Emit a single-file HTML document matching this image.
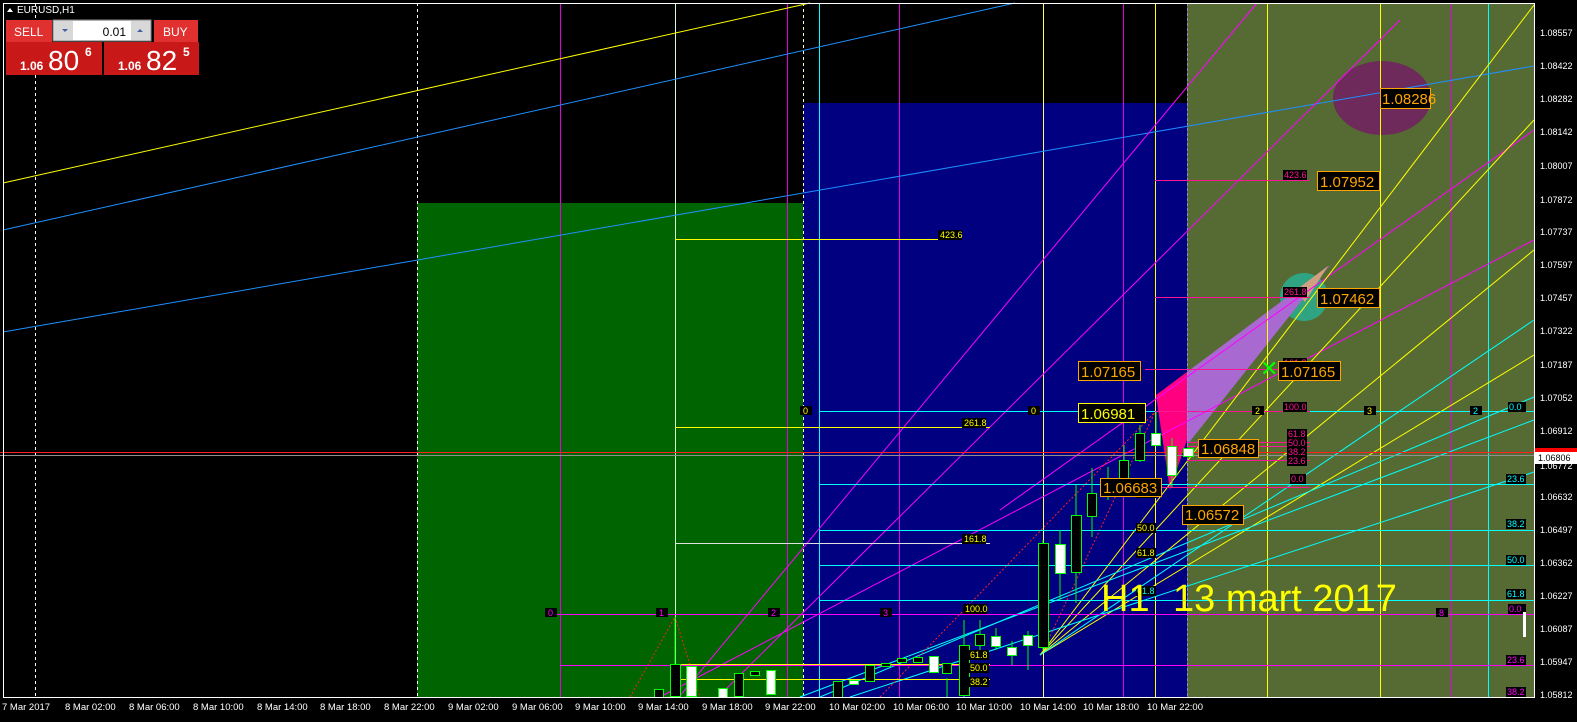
<!DOCTYPE html>
<html><head><meta charset="utf-8"><style>
html,body{margin:0;padding:0;background:#000;width:1577px;height:722px;overflow:hidden;font-family:"Liberation Sans",sans-serif}
svg{position:absolute;left:0;top:0}
.ax{font:9px "Liberation Sans",sans-serif;fill:#fff}
.tx{font:9.5px "Liberation Sans",sans-serif;fill:#fff}
.lb{font:9px "Liberation Sans",sans-serif}
.big{font:15px "Liberation Sans",sans-serif;fill:#ffa500}
</style></head><body>
<svg width="1577" height="722" xmlns="http://www.w3.org/2000/svg">
<rect width="1577" height="722" fill="#000"/>
<rect x="417" y="203" width="386" height="494" fill="#006400"/>
<rect x="803" y="103" width="384" height="594" fill="#000080"/>
<rect x="1187" y="3" width="347" height="694" fill="#566b33"/>
<ellipse cx="1382" cy="98" rx="49" ry="37" fill="#6e2a5a"/>
<circle cx="1304" cy="297" r="24" fill="#2fa382"/>
<polygon points="1156,395 1187,372 1187,440 1170,490" fill="#ff0080"/>
<polygon points="1187,372 1330,265 1187,445" fill="#a86ad0"/>
<polygon points="1296,290 1328,266 1305,302" fill="#d0a080"/>
<g stroke-width="1">
<line x1="35.5" y1="3" x2="35.5" y2="697" stroke="#fff" stroke-dasharray="3,3"/>
<line x1="417.5" y1="3" x2="417.5" y2="697" stroke="#fff" stroke-dasharray="3,3"/>
<line x1="803.5" y1="3" x2="803.5" y2="697" stroke="#ffffcc" stroke-dasharray="3,3"/>
<line x1="1187.5" y1="3" x2="1187.5" y2="697" stroke="#9090d0" stroke-dasharray="3,2"/>
<line x1="560.5" y1="3" x2="560.5" y2="697" stroke="#e000e0"/>
<line x1="787.5" y1="3" x2="787.5" y2="697" stroke="#e000e0"/>
<line x1="899.5" y1="3" x2="899.5" y2="697" stroke="#e000e0"/>
<line x1="1123.5" y1="3" x2="1123.5" y2="697" stroke="#e000e0"/>
<line x1="1450.5" y1="3" x2="1450.5" y2="697" stroke="#e000e0"/>
<line x1="675.5" y1="3" x2="675.5" y2="697" stroke="#d0ffd0"/>
<line x1="819.5" y1="3" x2="819.5" y2="697" stroke="#00ffff"/>
<line x1="1488.5" y1="3" x2="1488.5" y2="697" stroke="#00ffff"/>
<line x1="1043.5" y1="3" x2="1043.5" y2="697" stroke="#ffff60"/>
<line x1="1155.5" y1="3" x2="1155.5" y2="697" stroke="#ffff00"/>
<line x1="1267.5" y1="3" x2="1267.5" y2="697" stroke="#ffff00"/>
<line x1="1380.5" y1="3" x2="1380.5" y2="697" stroke="#ffff00"/>
</g>
<g stroke-width="1" fill="none">
<line x1="3" y1="183" x2="810" y2="3" stroke="#ffff00"/>
<line x1="3" y1="230" x2="1015" y2="3" stroke="#1e90ff"/>
<line x1="3" y1="332" x2="1534" y2="66" stroke="#1e90ff"/>
<line x1="679" y1="697" x2="1257" y2="3" stroke="#ff00ff"/>
<line x1="718" y1="697" x2="1400" y2="20" stroke="#ff00ff"/>
<line x1="1000" y1="510" x2="1534" y2="130" stroke="#ff00ff"/>
<line x1="660" y1="697" x2="1534" y2="240" stroke="#ff00ff"/>
<line x1="1040" y1="655" x2="1534" y2="5" stroke="#ffff00"/>
<line x1="1040" y1="655" x2="1534" y2="120" stroke="#ffff00"/>
<line x1="1040" y1="655" x2="1534" y2="250" stroke="#ffff00"/>
<line x1="1040" y1="655" x2="1534" y2="355" stroke="#ffff00"/>
<line x1="1040" y1="655" x2="1534" y2="320" stroke="#00ffff"/>
<line x1="820" y1="697" x2="1534" y2="397" stroke="#00ffff"/>
<line x1="850" y1="697" x2="1534" y2="472" stroke="#00ffff"/>
<line x1="800" y1="697" x2="1534" y2="420" stroke="#00ffff"/>
<line x1="630" y1="697" x2="675" y2="617" stroke="#ff2020" stroke-dasharray="2,2"/>
<line x1="675" y1="617" x2="700" y2="697" stroke="#ff2020" stroke-dasharray="2,2"/>
<line x1="880" y1="697" x2="1155" y2="412" stroke="#ff2020" stroke-dasharray="2,2"/>
<line x1="1045" y1="647" x2="1155" y2="412" stroke="#ff2020" stroke-dasharray="2,2"/>
</g>
<g stroke-width="1">
<line x1="0" y1="452.5" x2="1534" y2="452.5" stroke="#ff2020"/>
<line x1="0" y1="455.5" x2="1534" y2="455.5" stroke="#909090"/>
<line x1="675" y1="239.5" x2="960" y2="239.5" stroke="#ffff00"/>
<line x1="675" y1="427.5" x2="990" y2="427.5" stroke="#ffff00"/>
<line x1="675" y1="543.5" x2="990" y2="543.5" stroke="#e0e0e0"/>
<line x1="675" y1="664.5" x2="990" y2="664.5" stroke="#ffff00"/>
<line x1="675" y1="679.5" x2="990" y2="679.5" stroke="#ffff00"/>
<line x1="819" y1="411.5" x2="1534" y2="411.5" stroke="#00ffff"/>
<line x1="819" y1="484.5" x2="1534" y2="484.5" stroke="#00ffff"/>
<line x1="819" y1="530.5" x2="1534" y2="530.5" stroke="#00ffff"/>
<line x1="819" y1="565.5" x2="1534" y2="565.5" stroke="#00ffff"/>
<line x1="819" y1="600.5" x2="1534" y2="600.5" stroke="#00ffff"/>
<line x1="545" y1="614.5" x2="1534" y2="614.5" stroke="#ff00ff"/>
<line x1="560" y1="665.5" x2="1534" y2="665.5" stroke="#ff00ff"/>
<line x1="1155" y1="180.5" x2="1310" y2="180.5" stroke="#ff1493"/>
<line x1="1155" y1="297.5" x2="1310" y2="297.5" stroke="#ff1493"/>
<line x1="1145" y1="369.5" x2="1310" y2="369.5" stroke="#ff1493"/>
<line x1="1155" y1="411.5" x2="1310" y2="411.5" stroke="#ff1493"/>
<line x1="1187" y1="442.5" x2="1310" y2="442.5" stroke="#ff1493"/>
<line x1="1187" y1="446.5" x2="1310" y2="446.5" stroke="#ff1493"/>
<line x1="1187" y1="460.5" x2="1310" y2="460.5" stroke="#ff1493"/>
<line x1="1155" y1="487.5" x2="1310" y2="487.5" stroke="#ff1493"/>
</g>
<g stroke="#00ff00" stroke-width="1">
<line x1="1043" y1="540" x2="1043" y2="650"/><rect x="1038.5" y="543.5" width="10" height="104" fill="#000"/>
<line x1="1060" y1="530" x2="1060" y2="600"/><rect x="1055.5" y="544.5" width="10" height="29" fill="#fff"/>
<line x1="1076" y1="485" x2="1076" y2="603"/><rect x="1071.5" y="515.5" width="10" height="57" fill="#000"/>
<line x1="1092" y1="468" x2="1092" y2="537"/><rect x="1087.5" y="493.5" width="9" height="23" fill="#000"/>
<line x1="1108" y1="467" x2="1108" y2="500"/><rect x="1103.5" y="488.5" width="9" height="5" fill="#000"/>
<line x1="1124" y1="445" x2="1124" y2="488"/><rect x="1119.5" y="460.5" width="9" height="27" fill="#000"/>
<line x1="1140" y1="425" x2="1140" y2="462"/><rect x="1135.5" y="433.5" width="9" height="27" fill="#000"/>
<line x1="1156" y1="412" x2="1156" y2="446"/><rect x="1151.5" y="433.5" width="9" height="12" fill="#fff"/>
<line x1="1172" y1="438" x2="1172" y2="487"/><rect x="1167.5" y="446.5" width="9" height="29" fill="#fff"/>
<rect x="1183.5" y="448.5" width="10" height="8" fill="#fff"/>
<line x1="964" y1="620" x2="964" y2="697"/><rect x="959.5" y="645.5" width="10" height="50" fill="#000"/>
<line x1="980" y1="620" x2="980" y2="657"/><rect x="975.5" y="634.5" width="9" height="11" fill="#000"/>
<line x1="996" y1="628" x2="996" y2="650"/><rect x="991.5" y="636.5" width="9" height="10" fill="#fff"/>
<line x1="1012" y1="641" x2="1012" y2="665"/><rect x="1007.5" y="647.5" width="9" height="8" fill="#fff"/>
<line x1="1028" y1="631" x2="1028" y2="670"/><rect x="1023.5" y="635.5" width="9" height="10" fill="#fff"/>
<line x1="947" y1="678" x2="947" y2="697"/><rect x="942.5" y="663.5" width="9" height="10" fill="#000"/>
<rect x="929.5" y="656.5" width="9" height="16" fill="#fff"/>
<rect x="913.5" y="657.5" width="9" height="5" fill="#000"/>
<rect x="897.5" y="658.5" width="9" height="4" fill="#000"/>
<rect x="881.5" y="663.5" width="9" height="3" fill="#000"/>
<rect x="865.5" y="665.5" width="9" height="16" fill="#000"/>
<rect x="849.5" y="680.5" width="9" height="4" fill="#fff"/>
<rect x="833.5" y="681.5" width="9" height="16" fill="#000"/>
<line x1="675" y1="617" x2="675" y2="697"/><rect x="670.5" y="664.5" width="10" height="32" fill="#000"/>
<rect x="686.5" y="666.5" width="10" height="30" fill="#fff"/>
<rect x="654.5" y="689.5" width="9" height="8" fill="#000"/>
<rect x="718.5" y="688.5" width="9" height="9" fill="#fff"/>
<rect x="734.5" y="673.5" width="9" height="23" fill="#000"/>
<rect x="750.5" y="671.5" width="9" height="4" fill="#000"/>
<rect x="766.5" y="670.5" width="9" height="24" fill="#fff"/>
</g>
<g class="lb">
<rect x="938" y="230" width="24" height="10" fill="#000"/><text x="940" y="238" fill="#ffff00">423.6</text>
<rect x="962" y="418" width="24" height="10" fill="#000"/><text x="964" y="426" fill="#ffff00">261.8</text>
<rect x="962" y="534" width="24" height="10" fill="#000"/><text x="964" y="542" fill="#ffff00">161.8</text>
<rect x="963" y="604" width="24" height="10" fill="#000"/><text x="965" y="612" fill="#ffff00">100.0</text>
<rect x="969" y="650" width="20" height="10" fill="#000"/><text x="970" y="658" fill="#ffff00">61.8</text>
<rect x="969" y="663" width="20" height="10" fill="#000"/><text x="970" y="671" fill="#ffff00">50.0</text>
<rect x="969" y="677" width="20" height="10" fill="#000"/><text x="970" y="685" fill="#ffff00">38.2</text>
<rect x="1283" y="170" width="24" height="10" fill="#000"/><text x="1284" y="178" fill="#ff1493">423.6</text>
<rect x="1283" y="287" width="24" height="10" fill="#000"/><text x="1284" y="295" fill="#ff1493">261.8</text>
<rect x="1283" y="358" width="24" height="10" fill="#000"/><text x="1284" y="366" fill="#ff1493">161.8</text>
<rect x="1283" y="402" width="24" height="10" fill="#000"/><text x="1284" y="410" fill="#ff1493">100.0</text>
<rect x="1287" y="429" width="20" height="9" fill="#000"/><text x="1288" y="437" fill="#ff1493">61.8</text>
<rect x="1287" y="438" width="20" height="9" fill="#000"/><text x="1288" y="446" fill="#ff1493">50.0</text>
<rect x="1287" y="447" width="20" height="9" fill="#000"/><text x="1288" y="455" fill="#ff1493">38.2</text>
<rect x="1287" y="456" width="20" height="10" fill="#000"/><text x="1288" y="464" fill="#ff1493">23.6</text>
<rect x="1290" y="474" width="16" height="10" fill="#000"/><text x="1291" y="482" fill="#ff1493">0.0</text>
<rect x="1508" y="402" width="18" height="10" fill="#000"/><text x="1509" y="410" fill="#00ffff">0.0</text>
<rect x="1506" y="474" width="20" height="10" fill="#000"/><text x="1507" y="482" fill="#00ffff">23.6</text>
<rect x="1506" y="519" width="20" height="10" fill="#000"/><text x="1507" y="527" fill="#00ffff">38.2</text>
<rect x="1506" y="555" width="20" height="10" fill="#000"/><text x="1507" y="563" fill="#00ffff">50.0</text>
<rect x="1506" y="589" width="20" height="10" fill="#000"/><text x="1507" y="597" fill="#00ffff">61.8</text>
<rect x="1508" y="604" width="18" height="10" fill="#000"/><text x="1509" y="612" fill="#ff00ff">0.0</text>
<rect x="1506" y="655" width="20" height="10" fill="#000"/><text x="1507" y="663" fill="#ff00ff">23.6</text>
<rect x="1506" y="687" width="20" height="10" fill="#000"/><text x="1507" y="695" fill="#ff00ff">38.2</text>
<rect x="1136" y="523" width="20" height="10" fill="#000"/><text x="1137" y="531" fill="#ffff00">50.0</text>
<rect x="1136" y="548" width="20" height="10" fill="#000"/><text x="1137" y="556" fill="#ffff00">61.8</text>
<rect x="1136" y="488" width="20" height="10" fill="#000"/><text x="1137" y="496" fill="#ffff00">38.2</text>
<rect x="1136" y="586" width="20" height="10" fill="#000"/><text x="1137" y="594" fill="#00ffff">61.8</text>
<rect x="545" y="608" width="12" height="9" fill="#000"/><text x="548" y="616" fill="#ff00ff">0</text>
<rect x="656" y="608" width="12" height="9" fill="#000"/><text x="659" y="616" fill="#ff00ff">1</text>
<rect x="768" y="608" width="12" height="9" fill="#000"/><text x="771" y="616" fill="#ff00ff">2</text>
<rect x="880" y="608" width="12" height="9" fill="#000"/><text x="883" y="616" fill="#ff00ff">3</text>
<rect x="1436" y="608" width="12" height="9" fill="#000"/><text x="1439" y="616" fill="#ff00ff">8</text>
<rect x="800" y="406" width="12" height="9" fill="#000"/><text x="803" y="414" fill="#ffff00">0</text>
<rect x="1028" y="406" width="12" height="9" fill="#000"/><text x="1031" y="414" fill="#ffff00">0</text>
<rect x="1252" y="406" width="12" height="9" fill="#000"/><text x="1255" y="414" fill="#ffff00">2</text>
<rect x="1364" y="406" width="12" height="9" fill="#000"/><text x="1367" y="414" fill="#ffff00">3</text>
<rect x="1470" y="406" width="12" height="9" fill="#000"/><text x="1473" y="414" fill="#00ffff">2</text>
</g>
<g class="big">
<rect x="1380.5" y="88.5" width="50" height="20" fill="#000" stroke="#ffa500"/><text x="1382" y="104">1.08286</text>
<rect x="1317.5" y="171.5" width="62" height="19" fill="#000" stroke="#ffa500"/><text x="1320" y="187">1.07952</text>
<rect x="1317.5" y="288.5" width="62" height="19" fill="#000" stroke="#ffa500"/><text x="1320" y="304">1.07462</text>
<rect x="1078.5" y="361.5" width="62" height="19" fill="#000" stroke="#ffa500"/><text x="1081" y="377">1.07165</text>
<rect x="1278.5" y="361.5" width="62" height="19" fill="#000" stroke="#ffa500"/><text x="1281" y="377">1.07165</text>
<rect x="1078.5" y="403.5" width="67" height="19" fill="#000" stroke="#ffff00"/><text x="1081" y="419" fill="#ffff00">1.06981</text>
<rect x="1198.5" y="439.5" width="60" height="18" fill="#000" stroke="#ffa500"/><text x="1201" y="454">1.06848</text>
<rect x="1100.5" y="478.5" width="61" height="18" fill="#000" stroke="#ffa500"/><text x="1103" y="493">1.06683</text>
<rect x="1182.5" y="505.5" width="61" height="19" fill="#000" stroke="#ffa500"/><text x="1185" y="520">1.06572</text>
</g>
<text x="1260" y="376" font-size="22" fill="#00ff00" font-family="Liberation Sans">✕</text>
<text x="1101" y="611" font-size="38" fill="#ffff00" font-family="Liberation Sans">H1</text>
<text x="1173" y="611" font-size="38" fill="#ffff00" font-family="Liberation Sans">13 mart 2017</text>
<rect x="3.5" y="3.5" width="1531" height="694" fill="none" stroke="#fff"/>
<g class="ax">
<text x="1540" y="36">1.08557</text><text x="1540" y="69">1.08422</text><text x="1540" y="102">1.08282</text>
<text x="1540" y="135">1.08142</text><text x="1540" y="169">1.08007</text><text x="1540" y="203">1.07872</text>
<text x="1540" y="235">1.07737</text><text x="1540" y="268">1.07597</text><text x="1540" y="301">1.07457</text>
<text x="1540" y="334">1.07322</text><text x="1540" y="368">1.07187</text><text x="1540" y="401">1.07052</text>
<text x="1540" y="434">1.06912</text><text x="1540" y="469">1.06772</text><text x="1540" y="500">1.06632</text>
<text x="1540" y="533">1.06497</text><text x="1540" y="566">1.06362</text><text x="1540" y="599">1.06227</text>
<text x="1540" y="632">1.06087</text><text x="1540" y="665">1.05947</text><text x="1540" y="698">1.05812</text>
</g>
<rect x="1535" y="448" width="42" height="5" fill="#ff0000"/>
<rect x="1535" y="452" width="42" height="12" fill="#fff"/>
<text x="1538" y="461" font-size="9" fill="#000" font-family="Liberation Sans">1.06806</text>
<rect x="1523" y="612" width="3" height="25" fill="#fff"/>
<g class="tx">
<text x="2" y="710">7 Mar 2017</text>
<text x="65" y="710">8 Mar 02:00</text><text x="129" y="710">8 Mar 06:00</text>
<text x="193" y="710">8 Mar 10:00</text><text x="257" y="710">8 Mar 14:00</text>
<text x="320" y="710">8 Mar 18:00</text><text x="384" y="710">8 Mar 22:00</text>
<text x="448" y="710">9 Mar 02:00</text><text x="512" y="710">9 Mar 06:00</text>
<text x="575" y="710">9 Mar 10:00</text><text x="638" y="710">9 Mar 14:00</text>
<text x="702" y="710">9 Mar 18:00</text><text x="765" y="710">9 Mar 22:00</text>
<text x="829" y="710">10 Mar 02:00</text><text x="893" y="710">10 Mar 06:00</text>
<text x="956" y="710">10 Mar 10:00</text><text x="1020" y="710">10 Mar 14:00</text>
<text x="1083" y="710">10 Mar 18:00</text><text x="1147" y="710">10 Mar 22:00</text>
</g>
<polygon points="7,12 10,8 13,12" fill="#fff"/>
<text x="17" y="13" font-size="10" fill="#fff" font-family="Liberation Sans">EURUSD,H1</text>
<rect x="6" y="20" width="46" height="22" fill="#e03030"/>
<text x="14" y="36" font-size="12" fill="#fff" font-family="Liberation Sans">SELL</text>
<rect x="53" y="20" width="98" height="21" fill="#d8d8d8" stroke="#888"/>
<rect x="73" y="21" width="58" height="19" fill="#fff"/>
<polygon points="62,29 68,29 65,32" fill="#4060a0"/><polygon points="137,32 143,32 140,29" fill="#4060a0"/>
<text x="126" y="36" font-size="12" fill="#000" text-anchor="end" font-family="Liberation Sans">0.01</text>
<rect x="154" y="20" width="44" height="22" fill="#e03030"/>
<text x="163" y="36" font-size="12" fill="#fff" font-family="Liberation Sans">BUY</text>
<rect x="6" y="42" width="96" height="33" fill="#c81818"/>
<rect x="104" y="42" width="95" height="33" fill="#c81818"/>
<text x="20" y="70" font-size="12" font-weight="bold" fill="#fff" font-family="Liberation Sans">1.06</text>
<text x="48" y="70" font-size="28" fill="#fff" font-family="Liberation Sans">80</text>
<text x="85" y="56" font-size="12" font-weight="bold" fill="#fff" font-family="Liberation Sans">6</text>
<text x="118" y="70" font-size="12" font-weight="bold" fill="#fff" font-family="Liberation Sans">1.06</text>
<text x="146" y="70" font-size="28" fill="#fff" font-family="Liberation Sans">82</text>
<text x="183" y="56" font-size="12" font-weight="bold" fill="#fff" font-family="Liberation Sans">5</text>
</svg>
</body></html>
